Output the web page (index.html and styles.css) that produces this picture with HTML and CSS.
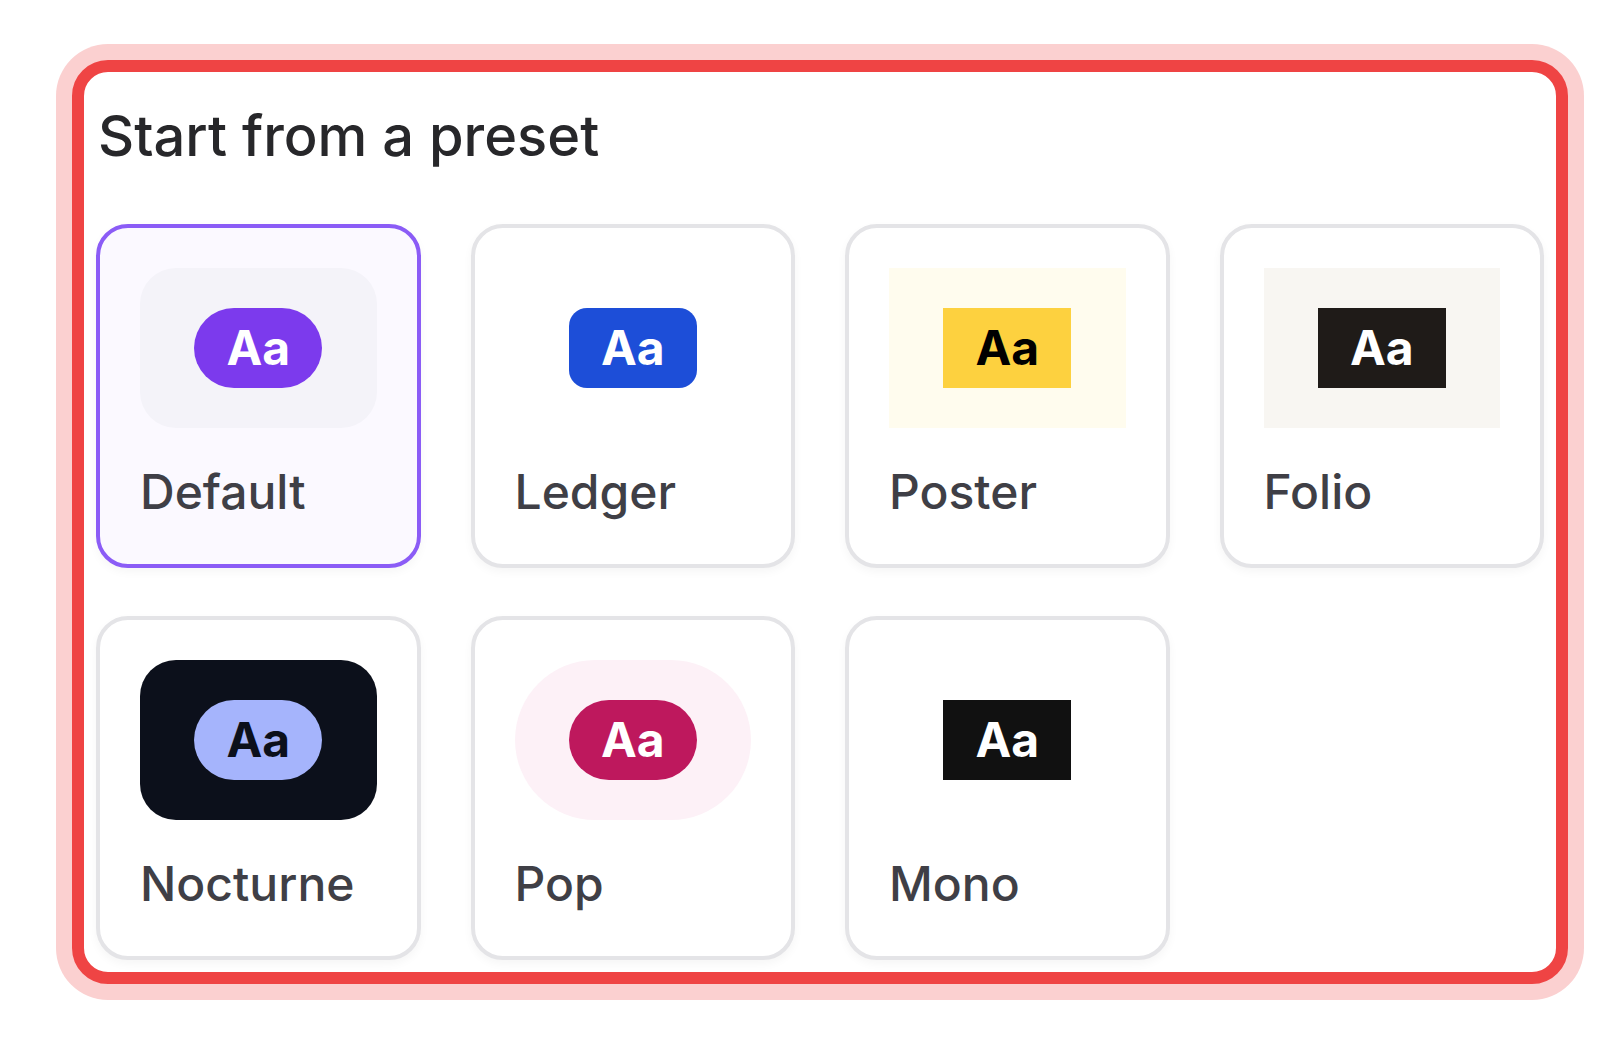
FILE: index.html
```html
<!DOCTYPE html>
<html>
<head>
    <title>Presets</title>
    <link rel="stylesheet" href="styles.css">
</head>
<body>
    <div class="preset-panel">
        <h2>Start from a preset</h2>
        <div class="preset-grid">
            <div class="preset-card is-active">
                <div class="preview preview-default"><span class="swatch swatch-default">Aa</span></div>
                <div class="preset-name">Default</div>
            </div>
            <div class="preset-card">
                <div class="preview"><span class="swatch swatch-ledger">Aa</span></div>
                <div class="preset-name">Ledger</div>
            </div>
            <div class="preset-card">
                <div class="preview preview-poster"><span class="swatch swatch-poster">Aa</span></div>
                <div class="preset-name">Poster</div>
            </div>
            <div class="preset-card">
                <div class="preview preview-folio"><span class="swatch swatch-folio">Aa</span></div>
                <div class="preset-name">Folio</div>
            </div>
            <div class="preset-card">
                <div class="preview preview-nocturne"><span class="swatch swatch-nocturne">Aa</span></div>
                <div class="preset-name">Nocturne</div>
            </div>
            <div class="preset-card">
                <div class="preview preview-pop"><span class="swatch swatch-pop">Aa</span></div>
                <div class="preset-name">Pop</div>
            </div>
            <div class="preset-card">
                <div class="preview"><span class="swatch swatch-mono">Aa</span></div>
                <div class="preset-name">Mono</div>
            </div>
        </div>
    </div>
</body>
</html>
```

FILE: styles.css
```css
body {
    font-family: Inter, "Noto Sans", sans-serif;
    background-color: #ffffff;
    margin: 0;
    padding: 60px 32px 48px 72px;
}

.preset-panel {
    background-color: #ffffff;
    border: 12px solid #ef4444;
    border-radius: 36px;
    box-shadow: 0 0 0 16px #fbd0d0;
    padding: 24px 12px 12px 12px;
}

.preset-panel h2 {
    margin: 0 0 48px 0;
    font-size: 56px;
    line-height: 80px;
    font-weight: 500;
    color: #27272a;
    padding-left: 2px;
}

.preset-grid {
    display: grid;
    grid-template-columns: repeat(4, 1fr);
    column-gap: 50px;
    row-gap: 48px;
}

.preset-card {
    border: 4px solid #e4e4e7;
    border-radius: 32px;
    background-color: #ffffff;
    padding: 40px;
    display: flex;
    flex-direction: column;
    gap: 32px;
    box-shadow: 0 4px 10px rgba(0, 0, 0, 0.04);
}

.preset-card.is-active {
    border-color: #8b5cf6;
    background-color: #fbf9ff;
}

.preview {
    height: 160px;
    display: flex;
    align-items: center;
    justify-content: center;
}

.preview-default {
    background-color: #f4f3f9;
    border-radius: 36px;
}

.preview-poster {
    background-color: #fffcee;
}

.preview-folio {
    background-color: #f8f6f2;
}

.preview-nocturne {
    background-color: #0c101b;
    border-radius: 36px;
}

.preview-pop {
    background-color: #fdf1f7;
    border-radius: 9999px;
}

.swatch {
    height: 80px;
    padding: 0 32px;
    display: flex;
    align-items: center;
    font-size: 48px;
    font-weight: 700;
    line-height: 1;
    color: #ffffff;
}

.swatch-default {
    background-color: #7c3aed;
    border-radius: 9999px;
}

.swatch-ledger {
    background-color: #1d4ed8;
    border-radius: 18px;
}

.swatch-poster {
    background-color: #fdd13f;
    color: #000000;
}

.swatch-folio {
    background-color: #1f1b18;
}

.swatch-nocturne {
    background-color: #a5b4fc;
    color: #0c101b;
    border-radius: 9999px;
}

.swatch-pop {
    background-color: #be185d;
    border-radius: 9999px;
}

.swatch-mono {
    background-color: #111111;
}

.preset-name {
    font-size: 48px;
    line-height: 64px;
    font-weight: 500;
    color: #3f3f46;
}
```
